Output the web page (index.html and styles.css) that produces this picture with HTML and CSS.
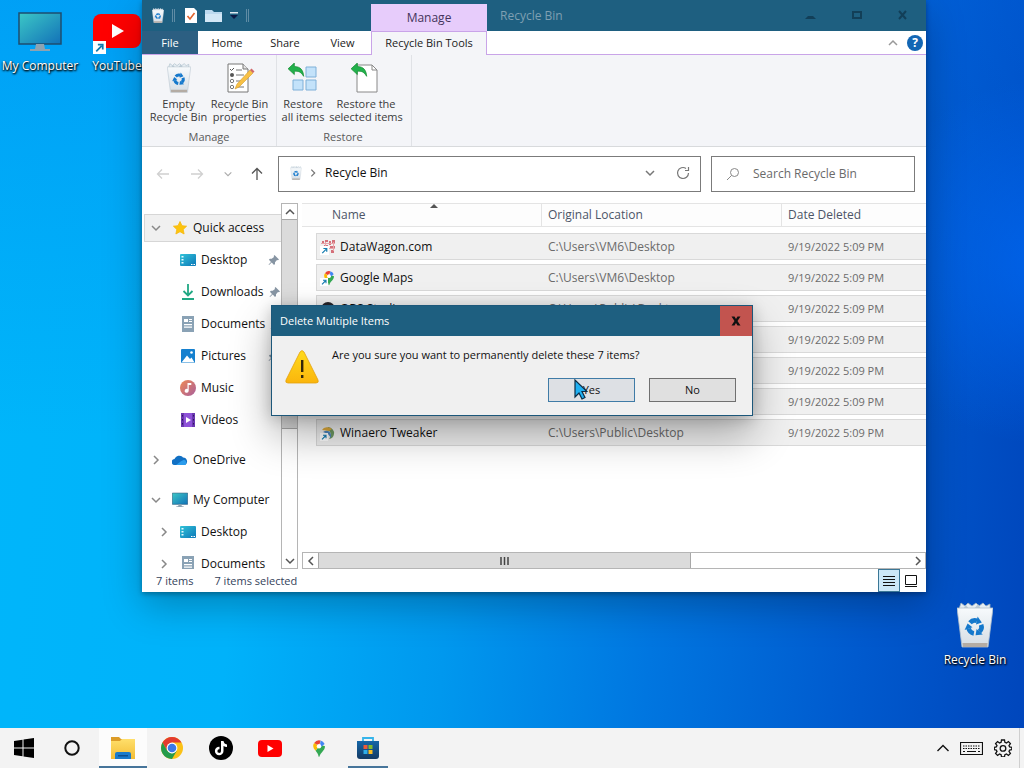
FILE: index.html
```html
<!DOCTYPE html>
<html lang="en">
<head>
    <meta charset="UTF-8">
    <meta name="viewport" content="width=device-width, initial-scale=1">
    <title>Recycle Bin</title>
    <link rel="stylesheet" href="styles.css">
</head>
<body>
<svg class="sprite" width="0" height="0" aria-hidden="true">
    <defs>
        <linearGradient id="screen" x1="0" y1="0" x2="1" y2="1"><stop offset="0" stop-color="#3cc8c6"/><stop offset="1" stop-color="#1271b8"/></linearGradient>
        <linearGradient id="teal" x1="0" y1="0" x2="1" y2="1"><stop offset="0" stop-color="#32c3d8"/><stop offset="1" stop-color="#0c78b8"/></linearGradient>
        <linearGradient id="warn" x1="0" y1="0" x2="0" y2="1"><stop offset="0" stop-color="#ffdb1c"/><stop offset="1" stop-color="#fbb50c"/></linearGradient>
        <linearGradient id="music" x1="0" y1="0" x2="1" y2="1"><stop offset="0" stop-color="#f08a54"/><stop offset="1" stop-color="#a85f9c"/></linearGradient>
        <linearGradient id="bin" x1="0" y1="0" x2="0" y2="1"><stop offset="0" stop-color="#f7fafc"/><stop offset="1" stop-color="#d5dde4"/></linearGradient>
        <linearGradient id="folder" x1="0" y1="0" x2="0" y2="1"><stop offset="0" stop-color="#ffdf6b"/><stop offset="1" stop-color="#f3bd35"/></linearGradient>
        <linearGradient id="bag" x1="0" y1="0" x2="0" y2="1"><stop offset="0" stop-color="#1466a8"/><stop offset="1" stop-color="#143a63"/></linearGradient>
    </defs>
    <symbol id="i-bin" viewBox="0 0 36 46">
        <path d="M2 7 4 1l4 3 3-3 4 3 4-3 3 3 4-3 3 3 4-2 0 6z" fill="#e6edf2" stroke="#9fb3c1" stroke-width=".8"/>
        <path d="M6 7l3-4 3 4zM17 7l4-5 3 5z" fill="#bccbd6"/>
        <path d="M0 6h36l-5 39H5z" fill="url(#bin)" stroke="#b4c2cd" stroke-width=".8"/>
        <path d="M5.500 41h25l-.4 4H6z" fill="#b4aca4"/>
        <g fill="#1478cc" transform="translate(18 25)">
            <g id="arm"><path d="M-5-4.200A6.500 6.500 0 0 1 2-6.200" fill="none" stroke="#1478cc" stroke-width="4.600"/><path d="M2.600-10.500 1-2.400 6.800-4.600z"/></g>
            <use href="#arm" transform="rotate(120)"/>
            <use href="#arm" transform="rotate(240)"/>
        </g>
    </symbol>
    <symbol id="i-pc" viewBox="0 0 44 40">
        <path d="M1 1h42v31H1z" fill="url(#screen)" stroke="#1d4d70" stroke-width="1.500"/>
        <path d="M18 32h8l1 5h5v2H12v-2h5z" fill="#8ea3b1"/>
    </symbol>
    <symbol id="i-youtube" viewBox="0 0 48 34">
        <rect width="48" height="34" rx="8" fill="#f00"/>
        <path d="M19 10v14l12-7z" fill="#fff"/>
    </symbol>
    <symbol id="i-shortcut" viewBox="0 0 12 12">
        <path d="M0 0h12v12H0z" fill="#fff"/>
        <path d="M3 9.500 8 4.500M4.500 3.300H9v4.500" fill="none" stroke="#127bb0" stroke-width="1.600"/>
    </symbol>
    <symbol id="i-down" viewBox="0 0 12 12"><path d="M2 4l4 4 4-4" fill="none" stroke="currentColor" stroke-width="1.500"/></symbol>
    <symbol id="i-up" viewBox="0 0 12 12"><path d="M2 8l4-4 4 4" fill="none" stroke="currentColor" stroke-width="1.500"/></symbol>
    <symbol id="i-right" viewBox="0 0 12 12"><path d="M4 2l4 4-4 4" fill="none" stroke="currentColor" stroke-width="1.500"/></symbol>
    <symbol id="i-left" viewBox="0 0 12 12"><path d="M8 2L4 6l4 4" fill="none" stroke="currentColor" stroke-width="1.500"/></symbol>
    <symbol id="i-close" viewBox="0 0 12 12"><path d="M1.500 1.500h3L6 4l1.500-2.500h3L7.500 6l3 4.500h-3L6 8l-1.500 2.500h-3l3-4.500z" fill="currentColor"/></symbol>
    <symbol id="i-pin" viewBox="0 0 12 12"><path d="M6.500 1l4.500 4.500-1 .8-1-.2L7 8.300V10l-1 1-2.300-2.400L1 11l-.4-.4L3 7.900.9 5.800l1-1h1.800L6 3l-.3-1z" fill="#8795a3"/></symbol>
    <symbol id="i-desktop" viewBox="0 0 16 16">
        <rect y="2" width="16" height="12" rx="1" fill="url(#teal)"/>
        <path d="M1.500 4h2v1.500h-2zM1.500 7h2v1.500h-2zM1.500 10h2v1.500h-2z" fill="#e3f9ff"/>
        <path d="M11 12h1.500v1H11zM13.500 12H15v1h-1.500z" fill="#fff"/>
    </symbol>
    <symbol id="i-downloads" viewBox="0 0 16 16"><path d="M8 0v11M3.500 7 8 11.500 12.500 7M2 15h12" fill="none" stroke="#21a884" stroke-width="1.800"/></symbol>
    <symbol id="i-documents" viewBox="0 0 16 16">
        <path d="M2 0h12v16H2z" fill="#8aa2b5"/>
        <path d="M4 3h4v3H4zM9 3h3v1H9zM9 5h3v1H9zM4 8h8v1.200H4zM4 10.500h8v1.200H4z" fill="#fff"/>
    </symbol>
    <symbol id="i-pictures" viewBox="0 0 16 16">
        <rect x="1" y="1" width="14" height="14" rx="1" fill="#1580cf"/>
        <path d="M1.500 14.500 7 7.500l3 3.500 1.500-1.500 3 5z" fill="#fff"/><circle cx="11.500" cy="4.500" r="1.300" fill="#fff"/>
    </symbol>
    <symbol id="i-music" viewBox="0 0 16 16">
        <circle cx="8" cy="8" r="8" fill="url(#music)"/>
        <path d="M7.500 3h3.800v2H8.700v5.800a2 2 0 1 1-1.200-1.900z" fill="#fff"/>
    </symbol>
    <symbol id="i-videos" viewBox="0 0 16 16">
        <rect x="1" y="1" width="14" height="14" rx="1" fill="#8e52d8"/>
        <path d="M1 1h3v14H1zM12 1h3v14h-3z" fill="#6a38b0"/>
        <path d="M2 3h1v1.500H2zM2 7h1v1.500H2zM2 11h1v1.500H2zM13 3h1v1.500h-1zM13 7h1v1.500h-1zM13 11h1v1.500h-1z" fill="#2f1560"/>
        <path d="M6 5v6l5-3z" fill="#fff"/>
    </symbol>
    <symbol id="i-onedrive" viewBox="0 0 16 16">
        <path d="M3 13a3 3 0 0 1-.5-6A5 5 0 0 1 11 5.500 4 4 0 0 1 13 13z" fill="#1170c4"/>
        <path d="M4 13 9 9.200l3-1.400a3 3 0 0 1 1.300 5.200z" fill="#2b9cec"/>
    </symbol>
    <symbol id="i-star" viewBox="0 0 16 16"><path d="M8 1.500l2 4.200 4.600.5-3.400 3.200.9 4.600L8 11.700 3.900 14l.9-4.600L1.400 6.200 6 5.700z" fill="#fcc40e" stroke="#f6b60c" stroke-width=".8"/></symbol>
    <symbol id="i-maps" viewBox="0 0 16 22">
        <path d="M1.500 3.500A8 8 0 0 1 10 .3L8 8z" fill="#ea4335"/>
        <path d="M8 8 1.500 3.500C-1 7 .5 11 3.500 14z" fill="#fbbc04"/>
        <path d="M16 8c0 6-6 8-7.500 14h-1C7 18 5 16 3.500 14L10 6z" fill="#34a853"/>
        <path d="M10 .3A8 8 0 0 1 15.500 5L9 10z" fill="#4285f4"/>
        <circle cx="8" cy="8" r="3" fill="#fff"/>
    </symbol>
    <symbol id="i-arrow" viewBox="0 0 20 18"><path d="M0 6.500 7 0v4c7 0 10 4 10.500 11C14 9.500 11.500 9 7 9.300V13z" fill="#22b14c" stroke="#128a2e" stroke-width=".8"/></symbol>
</svg>

<main class="desktop">
    <a class="shortcut shortcut-pc" href="#pc">
        <svg width="44" height="40"><use href="#i-pc"/></svg>
        <span>My Computer</span>
    </a>
    <a class="shortcut shortcut-youtube" href="#youtube">
        <svg width="48" height="40" viewBox="0 0 48 40"><use href="#i-youtube" width="48" height="34"/><use href="#i-shortcut" y="27" width="13" height="13"/></svg>
        <span>YouTube</span>
    </a>
    <a class="shortcut shortcut-bin" href="#bin">
        <svg width="36" height="46"><use href="#i-bin"/></svg>
        <span>Recycle Bin</span>
    </a>

    <section class="window">
        <header class="titlebar">
            <div class="quick-tools">
                <svg width="12" height="15"><use href="#i-bin"/></svg>
                <i class="sep"></i>
                <svg class="tool-check" width="12" height="15" viewBox="0 0 12 15"><path d="M0 0h9l3 3v12H0z" fill="#fff"/><path d="M2.500 8l2.500 3L9.500 5" fill="none" stroke="#e0632d" stroke-width="1.600"/></svg>
                <svg width="17" height="14" viewBox="0 0 17 14"><path d="M0 1h7l2 2h8v10H0z" fill="#bcd9ef"/><path d="M0 5h17v8H0z" fill="#d3e7f6"/></svg>
                <svg width="8" height="8" viewBox="0 0 8 8"><path d="M0 0h8v1.500H0z" fill="#dfe9f0"/><path d="M0 3h8L4 7z" fill="#0a1a46"/></svg>
                <i class="sep"></i>
            </div>
            <div class="tab-context">Manage</div>
            <h1>Recycle Bin</h1>
            <div class="window-buttons">
                <button type="button" aria-label="Minimize"><svg width="12" height="12" viewBox="0 0 12 12"><path d="M0 9l3-3h5l3 3z" fill="currentColor"/></svg></button>
                <button type="button" aria-label="Maximize"><svg width="12" height="12" viewBox="0 0 12 12"><path d="M2 2h8v6H2z" fill="none" stroke="currentColor" stroke-width="2"/></svg></button>
                <button type="button" aria-label="Close"><svg width="12" height="12" viewBox="0 0 12 12"><path d="M2 1l7 8M9 1l-7 8" stroke="currentColor" stroke-width="2"/></svg></button>
            </div>
        </header>

        <nav class="tabs">
            <button type="button" class="tab tab-file">File</button>
            <button type="button" class="tab">Home</button>
            <button type="button" class="tab">Share</button>
            <button type="button" class="tab tab-view">View</button>
            <button type="button" class="tab tab-active">Recycle Bin Tools</button>
            <div class="tabs-end">
                <button type="button" aria-label="Collapse the ribbon"><svg width="12" height="12"><use href="#i-up"/></svg></button>
                <button type="button" class="help" aria-label="Help">?</button>
            </div>
        </nav>

        <div class="ribbon">
            <div class="ribbon-group">
                <div class="ribbon-buttons">
                    <button type="button"><svg width="24" height="30"><use href="#i-bin"/></svg>Empty<br>Recycle Bin</button>
                    <button type="button">
                        <svg width="30" height="30" viewBox="0 0 30 30">
                            <path d="M3 1h15l5 5v23H3z" fill="#fff" stroke="#777"/><path d="M18 1v5h5" fill="#e5e5e5" stroke="#777"/>
                            <path d="M11 7h6M11 12h8M11 18h6M11 24h8" stroke="#777"/><circle cx="7" cy="12" r="2" fill="#555"/><circle cx="7" cy="18" r="1.700" fill="none" stroke="#777"/><circle cx="7" cy="24" r="1.700" fill="none" stroke="#777"/><path d="M5 6l1.500 1.500L9 5" fill="none" stroke="#555"/>
                            <path d="M10 26l2-5L25 7l3 3-14 14z" fill="#f8c146" stroke="#d39a2b" stroke-width=".6"/><path d="M25 7l1.500-1.500 3 3L28 10z" fill="#d0686b"/>
                        </svg>Recycle Bin<br>properties</button>
                </div>
                <p>Manage</p>
            </div>
            <div class="ribbon-group ribbon-restore">
                <div class="ribbon-buttons">
                    <button type="button">
                        <svg width="30" height="30" viewBox="0 0 30 30"><path d="M18 4h10v10H18zM5 17h10v10H5zM18 17h10v10H18z" fill="#c3e2fa" stroke="#7eb0d8"/><use href="#i-arrow" width="18" height="16"/></svg>Restore<br>all items</button>
                    <button type="button" class="wide">
                        <svg width="30" height="30" viewBox="0 0 30 30"><path d="M6 2h15l5 5v22H6z" fill="#fff" stroke="#888"/><path d="M21 2v5h5" fill="none" stroke="#888"/><use href="#i-arrow" width="18" height="16"/></svg>Restore the<br>selected items</button>
                </div>
                <p>Restore</p>
            </div>
        </div>

        <div class="address-row">
            <button type="button" class="move" aria-label="Back" disabled><svg width="14" height="14" viewBox="0 0 14 14"><path d="M13 7H1.500M6 2.500 1.500 7 6 11.500"/></svg></button>
            <button type="button" class="move" aria-label="Forward" disabled><svg width="14" height="14" viewBox="0 0 14 14"><path d="M1 7h11.500M8 2.500 12.500 7 8 11.500"/></svg></button>
            <button type="button" class="move move-recent" aria-label="Recent locations"><svg width="10" height="10" viewBox="0 0 12 12"><path d="M2 4l4 4 4-4"/></svg></button>
            <button type="button" class="move move-up" aria-label="Up"><svg width="14" height="14" viewBox="0 0 14 14"><path d="M7 13V1.500M2 6.500l5-5 5 5"/></svg></button>
            <div class="address">
                <svg width="12" height="14"><use href="#i-bin"/></svg>
                <svg class="crumb" width="10" height="10"><use href="#i-right"/></svg>
                <a href="#bin">Recycle Bin</a>
                <button type="button" aria-label="Previous locations"><svg width="12" height="12"><use href="#i-down"/></svg></button>
                <button type="button" aria-label="Refresh"><svg width="14" height="14" viewBox="0 0 14 14"><path d="M12.500 7A5.500 5.500 0 1 1 10 2.400M12.500 1v3.500H9" fill="none" stroke="currentColor" stroke-width="1.200"/></svg></button>
            </div>
            <label class="search">
                <svg width="14" height="14" viewBox="0 0 14 14"><circle cx="8.500" cy="5.500" r="4" fill="none" stroke="#888"/><path d="M5.500 8.500 1 13" stroke="#888"/></svg>
                <input type="search" placeholder="Search Recycle Bin" aria-label="Search Recycle Bin">
            </label>
        </div>

        <div class="content">
            <ul class="tree">
                <li><a class="current" href="#quick"><svg class="toggle"><use href="#i-down"/></svg><svg><use href="#i-star"/></svg>Quick access</a></li>
                <li><a class="sub" href="#desktop"><svg><use href="#i-desktop"/></svg>Desktop<svg class="pin"><use href="#i-pin"/></svg></a></li>
                <li><a class="sub" href="#downloads"><svg><use href="#i-downloads"/></svg>Downloads<svg class="pin"><use href="#i-pin"/></svg></a></li>
                <li><a class="sub" href="#documents"><svg><use href="#i-documents"/></svg>Documents<svg class="pin"><use href="#i-pin"/></svg></a></li>
                <li><a class="sub" href="#pictures"><svg><use href="#i-pictures"/></svg>Pictures<svg class="pin"><use href="#i-pin"/></svg></a></li>
                <li><a class="sub" href="#music"><svg><use href="#i-music"/></svg>Music</a></li>
                <li><a class="sub" href="#videos"><svg><use href="#i-videos"/></svg>Videos</a></li>
                <li class="root"><a href="#onedrive"><svg class="toggle"><use href="#i-right"/></svg><svg><use href="#i-onedrive"/></svg>OneDrive</a></li>
                <li class="root"><a href="#pc"><svg class="toggle"><use href="#i-down"/></svg><svg><use href="#i-pc"/></svg>My Computer</a></li>
                <li><a class="child" href="#pc-desktop"><svg class="toggle"><use href="#i-right"/></svg><svg><use href="#i-desktop"/></svg>Desktop</a></li>
                <li><a class="child" href="#pc-documents"><svg class="toggle"><use href="#i-right"/></svg><svg><use href="#i-documents"/></svg>Documents</a></li>
            </ul>
            <div class="scroll scroll-y">
                <button type="button" aria-label="Scroll up"><svg width="12" height="12"><use href="#i-up"/></svg></button>
                <div class="track"><div class="thumb"></div></div>
                <button type="button" aria-label="Scroll down"><svg width="12" height="12"><use href="#i-down"/></svg></button>
            </div>
            <div class="files">
                <div class="files-view">
                    <table>
                        <colgroup><col class="col-edge"><col class="col-name"><col class="col-place"><col></colgroup>
                        <thead>
                            <tr><th colspan="2" class="sorted">Name</th><th>Original Location</th><th>Date Deleted</th></tr>
                        </thead>
                        <tbody>
                            <tr>
                                <td></td>
                                <td><div class="file"><svg viewBox="0 0 16 16"><path d="M2 2h2v3H2zM5 1h3v2H5zM9 2h2v4H9zM12 1h3v3h-3zM4 6h4v2H4zM10 7h5v2h-5zM7 9h2v5H7zM11 11h3v3h-3z" fill="#d4707a"/><path d="M1 4h14v1H1zM3 9h12v1H3zM5 3h1v9H5zM13 3h1v9h-1z" fill="#e8a5aa"/><use href="#i-shortcut" y="7" width="9" height="9"/></svg>DataWagon.com</div></td>
                                <td>C:\Users\VM6\Desktop</td><td>9/19/2022 5:09 PM</td>
                            </tr>
                            <tr>
                                <td></td>
                                <td><div class="file"><svg viewBox="0 0 16 16"><use href="#i-maps" x="4" y="1" width="10" height="14"/><use href="#i-shortcut" y="8" width="8" height="8"/></svg>Google Maps</div></td>
                                <td>C:\Users\VM6\Desktop</td><td>9/19/2022 5:09 PM</td>
                            </tr>
                            <tr>
                                <td></td>
                                <td><div class="file"><svg viewBox="0 0 16 16"><circle cx="8" cy="8" r="7" fill="#26252a"/></svg>OBS Studio</div></td>
                                <td>C:\Users\Public\Desktop</td><td>9/19/2022 5:09 PM</td>
                            </tr>
                            <tr><td></td><td></td><td></td><td>9/19/2022 5:09 PM</td></tr>
                            <tr><td></td><td></td><td></td><td>9/19/2022 5:09 PM</td></tr>
                            <tr><td></td><td></td><td></td><td>9/19/2022 5:09 PM</td></tr>
                            <tr>
                                <td></td>
                                <td><div class="file"><svg viewBox="0 0 16 16"><path d="M8 2a7 6 0 0 1 6 7 6 6 0 0 1-5 5c3-4 2-8-2-9z" fill="#6f9a63"/><path d="M2 5a6 5 0 0 1 10-1L9 6z" fill="#e2ad3a"/><path d="M3 7c5-3 9 0 8 6l-3-4z" fill="#4f86bd"/><use href="#i-shortcut" y="8" width="8" height="8"/></svg>Winaero Tweaker</div></td>
                                <td>C:\Users\Public\Desktop</td><td>9/19/2022 5:09 PM</td>
                            </tr>
                        </tbody>
                    </table>
                </div>
                <div class="scroll scroll-x">
                    <button type="button" aria-label="Scroll left"><svg width="12" height="12"><use href="#i-left"/></svg></button>
                    <div class="track"><div class="thumb"><svg width="9" height="8" viewBox="0 0 9 8"><path d="M1 0v8M4.500 0v8M8 0v8" stroke="#444" stroke-width="1.500"/></svg></div></div>
                    <button type="button" aria-label="Scroll right"><svg width="12" height="12"><use href="#i-right"/></svg></button>
                </div>
            </div>
        </div>

        <footer class="status">
            <span>7 items</span>
            <span>7 items selected</span>
            <div class="views">
                <button type="button" class="on" aria-label="Details view"><svg width="12" height="12" viewBox="0 0 12 12"><path d="M0 1.500h12M0 4.500h12M0 7.500h12M0 10.500h12" stroke="#111"/></svg></button>
                <button type="button" aria-label="Large icons view"><svg width="12" height="12" viewBox="0 0 12 12"><path d="M.5.500h11v9H.5zM0 11.500h12" fill="none" stroke="#111"/></svg></button>
            </div>
        </footer>
    </section>

    <section class="dialog" role="dialog" aria-labelledby="dialog-title">
        <header>
            <h2 id="dialog-title">Delete Multiple Items</h2>
            <button type="button" aria-label="Close"><svg width="12" height="12"><use href="#i-close"/></svg></button>
        </header>
        <div class="dialog-body">
            <svg width="34" height="34" viewBox="0 0 34 34"><path d="M15 2q2-3 4 0l14 28q1 3-2 3H3q-3 0-2-3z" fill="url(#warn)" stroke="#e3a10c" stroke-width=".8"/><path d="M16 10h2.400v12H16zM16 25h2.400v3H16z" fill="#33270a"/></svg>
            <div>
                <p>Are you sure you want to permanently delete these 7 items?</p>
                <div class="answers">
                    <button type="button" class="yes">Yes</button>
                    <button type="button">No</button>
                </div>
            </div>
        </div>
        <svg class="cursor" width="14" height="22" viewBox="0 0 14 22"><path d="M1 1v17l4-4 3 6 3-1.500-3-6h5z" fill="#1fb0f2" stroke="#0b2c44" stroke-width="1.200"/></svg>
    </section>
</main>

<footer class="taskbar">
    <button type="button" aria-label="Start"><svg width="20" height="20" viewBox="0 0 20 20"><path d="M0 3l8.500-1.200v7.700H0zM9.500 1.600 20 0v9.500H9.500zM0 10.500h8.500v7.700L0 17zM9.500 10.500H20V20L9.500 18.400z"/></svg></button>
    <button type="button" aria-label="Search"><svg width="16" height="16" viewBox="0 0 16 16"><circle cx="8" cy="8" r="6.700" fill="none" stroke="#111" stroke-width="2"/></svg></button>
    <div class="apps">
        <button type="button" class="open" aria-label="File Explorer"><svg width="26" height="22" viewBox="0 0 26 22"><path d="M1 0h8l2 2h14v6H1z" fill="#dc9c28"/><path d="M1 4h9l2-2h13v20H1z" fill="url(#folder)"/><path d="M5 22v-5q0-2 2-2h12q2 0 2 2v5z" fill="#1a7bcb"/><path d="M8 18h10v1.500H8z" fill="#0d4f8e"/></svg></button>
        <button type="button" aria-label="Chrome"><svg width="22" height="22" viewBox="0 0 22 22"><circle cx="11" cy="11" r="11" fill="#fbc116"/><path d="M11 11 1.500 5.500A11 11 0 0 1 20.500 5.500H11z" fill="#e33b2e"/><path d="M1.500 5.500 6.200 13.700 11 11V5.500z" fill="#e33b2e"/><path d="M1.500 5.500 6.200 13.700 11 16.500l4.800-2.800L11 22A11 11 0 0 1 1.500 5.500z" fill="#249b4b"/><circle cx="11" cy="11" r="5.400" fill="#fff"/><circle cx="11" cy="11" r="4.300" fill="#3c78e6"/></svg></button>
        <button type="button" aria-label="TikTok"><svg width="24" height="24" viewBox="0 0 24 24"><circle cx="12" cy="12" r="12"/><path d="M12 5h2.500q.5 3 3.500 3.500V11q-2 0-3.500-1v5a4.300 4.300 0 1 1-4-4.300v2.600a1.800 1.800 0 1 0 1.500 1.700z" fill="#fff"/></svg></button>
        <button type="button" aria-label="YouTube"><svg width="24" height="17"><use href="#i-youtube"/></svg></button>
        <button type="button" aria-label="Google Maps"><svg width="12" height="17"><use href="#i-maps"/></svg></button>
        <button type="button" class="running" aria-label="Microsoft Store"><svg width="24" height="24" viewBox="0 0 24 24"><path d="M7 7V2h10v5" fill="none" stroke="#35b4ea" stroke-width="1.800"/><path d="M1 5h22v15q0 3-3 3H4q-3 0-3-3z" fill="url(#bag)"/><path d="M7.500 9h4v4h-4z" fill="#ee5a38"/><path d="M12.500 9h4v4h-4z" fill="#82bd2a"/><path d="M7.500 14h4v4h-4z" fill="#30aee8"/><path d="M12.500 14h4v4h-4z" fill="#fcbd20"/></svg></button>
    </div>
    <div class="tray">
        <button type="button" aria-label="Show hidden icons"><svg width="14" height="14" viewBox="0 0 14 14"><path d="M1.500 10 7 4.500l5.500 5.500" fill="none" stroke="#111" stroke-width="1.400"/></svg></button>
        <button type="button" aria-label="Keyboard"><svg width="23" height="13" viewBox="0 0 23 13"><path d="M.5.500h22v12H.5z" fill="none" stroke="#111" stroke-width="1.200"/><path d="M3 4h17M3 6.500h17" stroke="#111" stroke-width="1.200" stroke-dasharray="1.500 1"/><path d="M3 9.500h2M7 9.500h9M18 9.500h2" stroke="#111" stroke-width="1.200"/></svg></button>
        <button type="button" aria-label="Settings"><svg width="18" height="18" viewBox="0 0 18 18"><path d="M7.500 1h3l.4 2.300 1.600.7 1.900-1.400 2 2L15 6.500l.6 1.400 2.200.4v2.400l-2.200.4L15 12.500l1.400 1.900-2 2-1.900-1.400-1.600.7-.4 2.100h-3l-.4-2.100-1.600-.7-1.900 1.400-2-2L3 12.500l-.7-1.400-2-.4V8.300l2-.4.7-1.400-1.400-1.900 2-2L5.500 4l1.600-.7z" fill="none" stroke="#111" stroke-width="1.300"/><circle cx="9" cy="9.400" r="2.800" fill="none" stroke="#111" stroke-width="1.300"/></svg></button>
    </div>
</footer>
</body>
</html>
```
FILE: styles.css
```css
:root {
    --title: #1e5f80;
    --purple: #c9a4e8;
    --line: #d8dadc;
    --text: #1b1b1b;
    --muted: #6b6b6b;
    --small: 11px;
}

* {
    box-sizing: border-box;
}

body {
    margin: 0;
    height: 100vh;
    display: flex;
    flex-direction: column;
    overflow: hidden;
    font-family: "Open Sans", "Noto Sans", sans-serif;
    font-size: 12px;
    line-height: 16px;
    color: var(--text);
}

button {
    display: flex;
    align-items: center;
    justify-content: center;
    margin: 0;
    padding: 0;
    border: 0;
    background: none;
    font: inherit;
    color: inherit;
}

a {
    color: inherit;
    text-decoration: none;
}

h1, h2, p, ul {
    margin: 0;
    padding: 0;
    font-size: inherit;
    font-weight: 400;
}

svg {
    display: block;
    flex: none;
}

.sprite {
    position: absolute;
}

.desktop {
    position: relative;
    flex: 1;
    background:
        radial-gradient(circle at 102% 36%, rgba(0, 110, 255, .6), rgba(0, 90, 240, 0) 16%),
        linear-gradient(180deg, rgba(0, 110, 235, .3), rgba(0, 128, 240, 0) 60%),
        linear-gradient(95deg, #00b6fa 0%, #00b2fa 26%, #0098ee 46%, #0076e0 65%, #005ace 84%, #0046bc 100%);
}

/* desktop icons */
.shortcut {
    position: absolute;
    display: flex;
    flex-direction: column;
    align-items: center;
    gap: 6px;
    width: 80px;
    color: #fff;
    white-space: nowrap;
    text-shadow: 1px 1px 2px #000, 0 1px 2px #000;
}

.shortcut-pc {
    left: 0;
    top: 12px;
}

.shortcut-youtube {
    left: 77px;
    top: 14px;
    gap: 4px;
}

.shortcut-bin {
    right: 9px;
    top: 602px;
    gap: 4px;
}

/* explorer window */
.window {
    position: absolute;
    left: 142px;
    right: 98px;
    top: 0;
    bottom: 136px;
    display: flex;
    flex-direction: column;
    background: #fff;
    box-shadow: 0 14px 36px rgba(0, 0, 0, .25), 0 2px 5px rgba(0, 0, 0, .3);
    overflow: hidden;
}

.titlebar {
    display: flex;
    flex: none;
    height: 31px;
    background: var(--title);
}

.quick-tools {
    flex: none;
    width: 229px;
    display: flex;
    align-items: center;
    gap: 8px;
    padding-left: 10px;
}

.sep {
    width: 3px;
    height: 13px;
    border: 1px solid #5f8ca5;
    border-width: 0 1px;
}

.tool-check {
    margin-left: 2px;
}

.tab-context {
    width: 116px;
    margin-top: 4px;
    display: flex;
    align-items: center;
    justify-content: center;
    background: #e7ccfb;
    color: #44345c;
}

.titlebar h1 {
    padding: 8px 13px;
    color: #7f9fb2;
}

.window-buttons {
    display: flex;
    margin-left: auto;
    color: #123f58;
}

.window-buttons button {
    width: 46px;
}

.tabs {
    flex: none;
    display: flex;
    height: 24px;
    border-bottom: 1px solid var(--purple);
}

.tab {
    width: 58px;
    font-size: var(--small);
    white-space: nowrap;
}

.tab-file {
    width: 56px;
    background: #2c5f82;
    color: #fff;
}

.tab-view {
    width: 57px;
}

.tab-active {
    width: 116px;
    height: 24px;
    padding-bottom: 2px;
    border: 1px solid var(--purple);
    border-bottom: 0;
    background: #f4f5f8;
}

.tabs-end {
    display: flex;
    align-items: center;
    gap: 8px;
    margin-left: auto;
    padding-right: 3px;
    color: #999;
}

.help {
    width: 16px;
    height: 16px;
    border-radius: 50%;
    background: #1266b4;
    color: #fff;
    font-weight: 700;
}

.ribbon {
    flex: none;
    display: flex;
    height: 92px;
    border-bottom: 1px solid var(--line);
    background: #f4f5f8;
    font-size: var(--small);
    color: #3b3b3b;
}

.ribbon-group {
    width: 135px;
    padding: 8px 5px 0;
    border-right: 1px solid #e0e2e6;
    text-align: center;
}

.ribbon-buttons {
    display: flex;
    justify-content: center;
}

.ribbon-buttons button {
    flex: none;
    flex-direction: column;
    width: 61px;
    line-height: 13px;
    white-space: nowrap;
}

.ribbon-buttons svg {
    margin-bottom: 4px;
}

.ribbon-group p {
    margin-top: 6px;
    color: #5a5a5a;
}

.ribbon-restore .ribbon-buttons {
    justify-content: flex-start;
}

.ribbon-restore {
    padding: 8px 2px 0 0;
}

.ribbon-restore .ribbon-buttons button {
    width: 52px;
}

.ribbon-restore .ribbon-buttons .wide {
    width: 74px;
}

/* address bar */
.address-row {
    flex: none;
    display: flex;
    align-items: center;
    height: 56px;
    padding: 0 11px 2px 4px;
}

.move {
    width: 34px;
    height: 30px;
}

.move svg {
    fill: none;
    stroke: #555;
    stroke-width: 1.3;
}

.move:disabled svg {
    stroke: #d0d0d0;
}

.move-recent {
    width: 28px;
}

.move-recent svg {
    stroke: #aaa;
}

.move-up {
    width: 30px;
}

.address, .search {
    display: flex;
    align-items: center;
    height: 36px;
    border: 1px solid #7b7b7b;
    background: #fff;
}

.address {
    flex: 1;
    min-width: 0;
    margin: 0 10px 0 6px;
    padding: 0 1px 2px 11px;
    color: #777;
}

.address a {
    flex: 1;
    color: #111;
}

.address button {
    width: 33px;
    height: 30px;
}

.crumb {
    margin: 0 7px 0 6px;
}

.search {
    width: 204px;
    padding: 0 14px;
    gap: 13px;
}

.search input {
    flex: 1;
    min-width: 0;
    padding: 0;
    border: 0;
    outline: 0;
    background: none;
    font: inherit;
}

.search input::placeholder {
    color: #6a6a6a;
    opacity: 1;
}

/* tree and file list */
.content {
    flex: 1;
    display: flex;
    min-height: 0;
}

.tree {
    flex: none;
    width: 139px;
    padding: 9px 0 0 2px;
    overflow: hidden;
    list-style: none;
    color: #111;
}

.tree li {
    padding: 2px 0;
}

.tree .root {
    margin-top: 8px;
}

.tree a {
    display: flex;
    align-items: center;
    gap: 5px;
    height: 28px;
    padding-left: 6px;
    white-space: nowrap;
}

.tree a.current {
    padding-left: 5px;
    border: 1px solid #d6d6d6;
    border-right: 0;
    background: #f0f0f0;
}

.tree svg {
    width: 16px;
    height: 16px;
}

.tree .toggle {
    width: 12px;
    height: 12px;
    margin-right: 5px;
    color: #888;
}

.tree .child {
    padding-left: 14px;
}

.tree .sub {
    padding-left: 36px;
}

.tree .pin {
    width: 12px;
    height: 12px;
    margin-left: auto;
    margin-right: 1px;
}

.scroll {
    display: flex;
    flex: none;
    border: 1px solid #b5b5b5;
    background: #fff;
    color: #555;
}

.scroll button {
    flex: none;
    width: 15px;
    height: 15px;
}

.scroll .track {
    flex: 1;
}

.scroll .thumb {
    display: flex;
    align-items: center;
    justify-content: center;
    border: 1px solid #a8a8a8;
    background: #dbdbdb;
}

.scroll-y {
    flex-direction: column;
    width: 17px;
}

.scroll-y .thumb {
    height: 63%;
    border-width: 1px 0;
}

.scroll-x {
    height: 17px;
}

.scroll-x .thumb {
    width: 63%;
    height: 15px;
    border-width: 0 1px;
}

.files {
    flex: 1;
    display: flex;
    flex-direction: column;
    min-width: 0;
    margin-left: 4px;
}

.files-view {
    flex: 1;
    overflow: hidden;
}

.files table {
    width: 100%;
    table-layout: fixed;
    border-collapse: separate;
    border-spacing: 0;
}

.col-edge {
    width: 14px;
}

.col-name {
    width: 226px;
}

.col-place {
    width: 240px;
}

.files th {
    position: relative;
    height: 24px;
    padding: 0 6px;
    border: 1px solid #e4e4e4;
    border-width: 1px 1px 1px 0;
    background: #fdfdfd;
    font-weight: 400;
    text-align: left;
    color: #4c5567;
}

.files th:first-child {
    padding-left: 30px;
}

.files th:last-child {
    border-right: 0;
}

.sorted::after {
    content: "";
    position: absolute;
    left: 128px;
    top: 0;
    border: 4px solid transparent;
    border-top: 0;
    border-bottom-color: #555;
}

.files tbody::before {
    content: "";
    display: table-row;
    height: 6px;
}

.files td {
    height: 31px;
    padding: 0 6px;
    border-bottom: 4px solid transparent;
    background: #f0f0f0 padding-box;
    box-shadow: inset 0 1px #d9d9d9, inset 0 -1px #d9d9d9;
    color: var(--muted);
    white-space: nowrap;
}

.files td:first-child {
    background: none;
    box-shadow: none;
}

.files td:nth-child(2) {
    padding-left: 4px;
    box-shadow: inset 0 1px #d9d9d9, inset 0 -1px #d9d9d9, inset 1px 0 #d9d9d9;
}

.files td:last-child {
    font-size: var(--small);
}

.file {
    display: flex;
    align-items: center;
    gap: 4px;
    color: #111;
}

.file svg {
    width: 16px;
    height: 16px;
}

.status {
    flex: none;
    display: flex;
    align-items: center;
    gap: 21px;
    height: 23px;
    padding: 0 4px 0 14px;
    font-size: var(--small);
    color: #34425a;
}

.views {
    display: flex;
    align-self: stretch;
    margin-left: auto;
}

.views button {
    width: 22px;
}

.views .on {
    border: 1px solid #3b7796;
    background: #cbe8f8;
}

/* confirmation dialog */
.dialog {
    position: absolute;
    left: 271px;
    top: 305px;
    width: 482px;
    border: 1px solid #1c577a;
    background: #f0f0f0;
    box-shadow: 0 20px 40px rgba(0, 0, 0, .3), 0 2px 14px rgba(0, 0, 0, .2);
    font-size: var(--small);
}

.dialog header {
    display: flex;
    align-items: center;
    justify-content: space-between;
    height: 30px;
    padding-left: 8px;
    background: var(--title);
    color: #fff;
}

.dialog header button {
    width: 32px;
    height: 30px;
    background: #c2544f;
    color: #111;
}

.dialog-body {
    display: flex;
    gap: 13px;
    padding: 11px 16px 13px 13px;
    color: #111;
}

.dialog-body > svg {
    margin-top: 3px;
}

.dialog-body > div {
    flex: 1;
}

.answers {
    display: flex;
    justify-content: flex-end;
    gap: 14px;
    margin-top: 15px;
}

.answers button {
    width: 87px;
    height: 24px;
    border: 1px solid #707070;
    background: #e0e0e0;
}

.answers .yes {
    border-color: #3f7ba6;
    background: #dde0e4;
}

.cursor {
    position: absolute;
    left: 302px;
    top: 73px;
}

/* taskbar */
.taskbar {
    flex: none;
    display: flex;
    height: 40px;
    background: #f3f3f3;
}

.taskbar button {
    width: 48px;
}

.apps {
    display: flex;
    gap: 1px;
    margin-left: 3px;
}

.apps .open {
    border-top: 2px solid transparent;
    border-bottom: 2px solid #47759a;
    background: #fcfcfc;
}

.apps .running {
    width: 40px;
    margin: 0 4px;
    border-top: 2px solid transparent;
    border-bottom: 2px solid #47759a;
}

.tray {
    display: flex;
    margin-left: auto;
    margin-right: 4px;
    border-right: 1px solid #cfcfcf;
}

.tray button {
    width: 32px;
}

.tray button:first-child {
    width: 24px;
}
```
